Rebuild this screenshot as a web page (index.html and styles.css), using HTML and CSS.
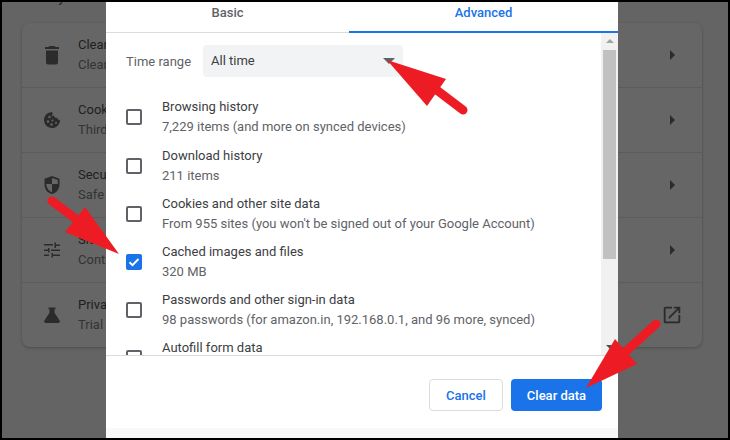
FILE: index.html
```html
<!doctype html>
<html lang="en">
<head>
  <meta charset="UTF-8">
  <meta name="viewport" content="width=device-width, initial-scale=1.0">
  <title>Clear browsing data</title>
  <link rel="stylesheet" href="styles.css">
</head>
<body>
  <div class="frame">
    <main class="settings">
      <h2 class="settings-title">Privacy and security</h2>
      <section class="card">
        <div class="row">
          <svg class="row-icon" viewBox="0 0 24 24"><path d="M6 19.500c0 1.100.9 2 2 2h8c1.100 0 2-.9 2-2V7.500H6v12zM19 4h-3.500l-1-1h-5l-1 1H5v2h14V4z"/></svg>
          <div class="row-text"><div class="row-title">Clear browsing data</div><div class="row-sub">Clear history, cookies, cache, and more</div></div>
          <span class="row-arrow"></span>
        </div>
        <div class="row">
          <svg class="row-icon" viewBox="0 0 24 24"><path d="M20 11.900c-1.500.2-2.700-.8-3-2.100-1.400.3-2.800-.6-3.100-2C12.900 7.700 12 6 12.300 4 7.700 4 4 7.600 4 12s3.600 8 8 8c4.400 0 8-3.600 8-8.100z"/><g fill="#666"><circle cx="9.500" cy="9" r="1.200"/><circle cx="8" cy="13.500" r="1.200"/><circle cx="12.500" cy="12.500" r="1"/><circle cx="11.500" cy="16.500" r="1.200"/><circle cx="16" cy="15" r="1"/><circle cx="12.500" cy="7.500" r=".8"/></g></svg>
          <div class="row-text"><div class="row-title">Cookies and other site data</div><div class="row-sub">Third-party cookies are blocked in Incognito mode</div></div>
          <span class="row-arrow"></span>
        </div>
        <div class="row">
          <svg class="row-icon" viewBox="0 0 24 24"><path d="M12 3 4.500 5.800v5.600c0 4.600 3.200 8.700 7.500 9.600 4.300-.9 7.500-5 7.500-9.600V5.800L12 3zm0 1.900 5.800 2.200V11H12V4.900zM12 11v8.200c-3.100-.9-5.500-4.200-5.800-8.200H12z"/></svg>
          <div class="row-text"><div class="row-title">Security</div><div class="row-sub">Safe Browsing and other security settings</div></div>
          <span class="row-arrow"></span>
        </div>
        <div class="row">
          <svg class="row-icon" viewBox="0 0 24 24"><path d="M4 16.500V18h5v-1.500H4zM4 6v1.500h9V6H4zm9 13.500V18h7v-1.500h-7V15h-1.500v4.500H13zM8 10v1.500H4V13h4v1.500h1.500V10H8zm12 3v-1.500h-9V13h9zm-5.500-3H16V8h4V6.500h-4V4.500h-1.500V10z"/></svg>
          <div class="row-text"><div class="row-title">Site settings</div><div class="row-sub">Controls what information sites can use</div></div>
          <span class="row-arrow"></span>
        </div>
        <div class="row">
          <svg class="row-icon" viewBox="0 0 24 24"><path d="M8.500 4.500v1.700h1v3.500L4.400 17.600c-.7 1.100.1 2.400 1.400 2.400h12.400c1.300 0 2.100-1.300 1.400-2.400l-5.100-7.900V6.200h1V4.500h-7z"/></svg>
          <div class="row-text"><div class="row-title">Privacy Sandbox</div><div class="row-sub">Trial features are on</div></div>
          <svg class="row-link" viewBox="0 0 24 24"><path d="M19 19H5V5h7V3H5c-1.100 0-2 .9-2 2v14c0 1.100.9 2 2 2h14c1.100 0 2-.9 2-2v-7h-2v7zM14 3v2h3.600l-9.800 9.800 1.400 1.400L19 6.400V10h2V3h-7z"/></svg>
        </div>
      </section>
    </main>

    <div class="dialog">
      <div class="tabs">
        <div class="tab tab-basic">Basic</div>
        <div class="tab tab-active">Advanced</div>
      </div>
      <div class="dialog-body">
        <div class="scroll-content">
          <div class="time-range">
            <label class="time-label">Time range</label>
            <div class="select">All time<span class="select-arrow"></span></div>
          </div>
          <div class="item">
            <span class="check"></span>
            <div><div class="item-title">Browsing history</div><div class="item-sub">7,229 items (and more on synced devices)</div></div>
          </div>
          <div class="item">
            <span class="check"></span>
            <div><div class="item-title">Download history</div><div class="item-sub">211 items</div></div>
          </div>
          <div class="item">
            <span class="check"></span>
            <div><div class="item-title">Cookies and other site data</div><div class="item-sub">From 955 sites (you won't be signed out of your Google Account)</div></div>
          </div>
          <div class="item">
            <span class="check check-on"><svg viewBox="0 0 16 16"><path d="M3.500 8.300 6.500 11.200 12.500 5" fill="none" stroke="#fff" stroke-width="2"/></svg></span>
            <div><div class="item-title">Cached images and files</div><div class="item-sub">320 MB</div></div>
          </div>
          <div class="item">
            <span class="check"></span>
            <div><div class="item-title">Passwords and other sign-in data</div><div class="item-sub">98 passwords (for amazon.in, 192.168.0.1, and 96 more, synced)</div></div>
          </div>
          <div class="item">
            <span class="check"></span>
            <div><div class="item-title">Autofill form data</div><div class="item-sub">3 addresses</div></div>
          </div>
        </div>
        <div class="scrollbar">
          <span class="sb-up"></span>
          <div class="sb-thumb"></div>
          <span class="sb-down"></span>
        </div>
      </div>
      <div class="dialog-foot">
        <button class="btn btn-cancel">Cancel</button>
        <button class="btn btn-clear">Clear data</button>
      </div>
      <div class="dialog-strip"></div>
    </div>

    <!-- red annotation arrows -->
    <svg class="arrows" viewBox="0 0 730 440">
      <g fill="#ed1c24" stroke="#ed1c24" stroke-linecap="round">
        <path d="M434 88 463 110" stroke-width="9"/>
        <path d="M387 60 446 79 427 106z" stroke-width="0"/>
        <path d="M52 201 88 228" stroke-width="9"/>
        <path d="M119 254 65 232 85 207z" stroke-width="0"/>
        <path d="M656 324 622 355" stroke-width="9"/>
        <path d="M586 388 615 339 637 364z" stroke-width="0"/>
      </g>
    </svg>
  </div>
</body>
</html>
```

FILE: styles.css
```css
* {
  box-sizing: border-box;
}

html, body {
  margin: 0;
  height: 100%;
}

body {
  background-color: #000;
  font-family: Roboto, sans-serif;
  overflow: hidden;
}

.frame {
  position: relative;
  width: 726px;
  height: 436px;
  margin: 2px;
  background-color: #646464;
  overflow: hidden;
}

.settings {
  padding: 0 26px 0 20px;
}

.settings-title {
  height: 13px;
  margin: -11px 0 0;
  font-size: 13px;
  font-weight: 500;
  line-height: 13px;
  color: #2a2a2a;
}

.card {
  height: 324px;
  margin-top: 19px;
  background-color: #666;
  border-radius: 8px;
  box-shadow: 0 1px 3px rgba(0, 0, 0, 0.25);
}

.row {
  display: flex;
  align-items: center;
  height: 65px;
  padding: 0 19px 0 18px;
  border-top: 1px solid #5c5c5c;
}

.row:first-child {
  border-top: 0;
  height: 64px;
}

.row-icon {
  width: 24px;
  height: 24px;
  fill: #2b2b2b;
  flex-shrink: 0;
}

.row-text {
  flex: 1;
  margin-left: 14px;
  font-size: 13px;
  line-height: 20px;
}

.row-title {
  color: #202020;
}

.row-sub {
  color: #333;
}

.row-arrow {
  width: 0;
  height: 0;
  margin-right: 8px;
  border-left: 5px solid #2b2b2b;
  border-top: 5px solid transparent;
  border-bottom: 5px solid transparent;
}

.row-link {
  width: 22px;
  height: 22px;
  fill: #2b2b2b;
}

.dialog {
  position: absolute;
  left: 104px;
  top: 0;
  width: 512px;
  height: 436px;
  display: flex;
  flex-direction: column;
  background-color: #fff;
}

.tabs {
  display: flex;
  height: 31px;
  border-bottom: 1px solid #dadce0;
}

.tab {
  height: 31px;
  padding-top: 3px;
  text-align: center;
  font-size: 13px;
  font-weight: 500;
  line-height: 15px;
  color: #5f6368;
}

.tab-basic {
  width: 243px;
}

.tab-active {
  flex: 1;
  color: #1a73e8;
  border-bottom: 2px solid #1a73e8;
}

.dialog-body {
  display: flex;
  height: 323px;
  border-bottom: 1px solid #dadce0;
  overflow: hidden;
}

.scroll-content {
  flex: 1;
  padding: 12px 0 0 20px;
  overflow: hidden;
}

.time-range {
  display: flex;
  align-items: center;
  height: 32px;
  margin-bottom: 16.4px;
}

.time-label {
  width: 77px;
  font-size: 13px;
  color: #5f6368;
}

.select {
  position: relative;
  width: 200px;
  height: 32px;
  padding: 0 8px;
  background-color: #f1f3f4;
  border-radius: 4px;
  font-size: 13px;
  line-height: 32px;
  color: #3c4043;
}

.select-arrow {
  position: absolute;
  right: 8px;
  top: 13px;
  width: 0;
  height: 0;
  border-top: 6px solid #5f6368;
  border-left: 6px solid transparent;
  border-right: 6px solid transparent;
}

.item {
  display: flex;
  align-items: center;
  height: 48.2px;
  font-size: 13px;
  line-height: 20px;
  white-space: nowrap;
}

.item-title {
  color: #3c4043;
}

.item-sub {
  color: #5f6368;
}

.check {
  flex-shrink: 0;
  width: 16px;
  height: 16px;
  margin-right: 20px;
  border: 2px solid #5f6368;
  border-radius: 2px;
}

.check-on {
  background-color: #1a73e8;
  border: 0;
}

.check-on svg {
  display: block;
}

.scrollbar {
  display: flex;
  flex-direction: column;
  align-items: center;
  width: 17px;
  background-color: #f1f1f1;
  padding: 0 2px;
}

.sb-up, .sb-down {
  width: 0;
  height: 0;
  border-left: 4px solid transparent;
  border-right: 4px solid transparent;
}

.sb-up {
  margin-top: 6px;
  border-bottom: 4px solid #a3a3a3;
}

.sb-thumb {
  width: 13px;
  height: 209px;
  margin-top: 7px;
  background-color: #c1c1c1;
}

.sb-down {
  margin-top: auto;
  margin-bottom: 6px;
  border-top: 4px solid #505050;
}

.dialog-foot {
  display: flex;
  justify-content: flex-end;
  gap: 8px;
  padding: 23px 16px 0 0;
  height: 72px;
}

.btn {
  height: 32px;
  border-radius: 4px;
  font-family: Roboto, sans-serif;
  font-size: 13px;
  font-weight: 500;
}

.btn-cancel {
  width: 74px;
  background-color: #fff;
  border: 1px solid #dadce0;
  color: #1a73e8;
}

.btn-clear {
  width: 91px;
  background-color: #1a73e8;
  border: 0;
  color: #fff;
}

.dialog-strip {
  flex: 1;
  background-color: #f8f9fa;
}

.arrows {
  position: absolute;
  left: -2px;
  top: -2px;
  width: 730px;
  height: 440px;
  pointer-events: none;
}
```
